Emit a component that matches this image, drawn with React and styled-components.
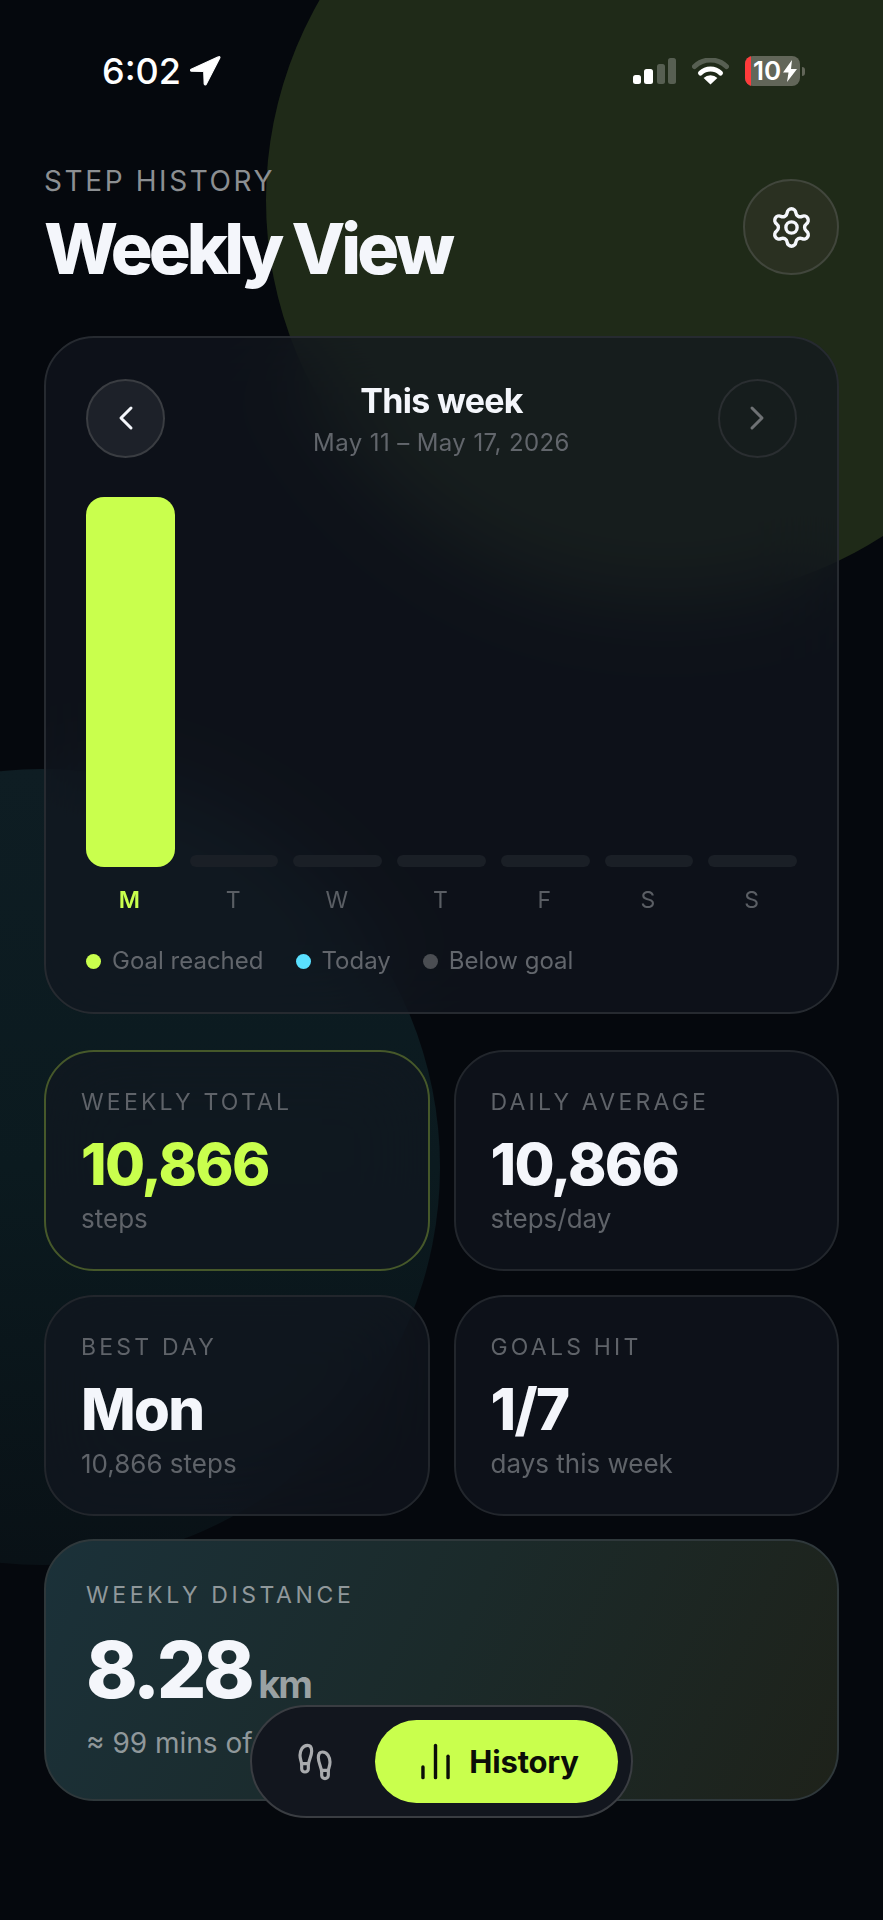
import React from "react";
import styled, { createGlobalStyle } from "styled-components";
import { ChevronLeft, ChevronRight, Settings, Footprints, ChartNoAxesColumn } from "lucide-react";

const LIME = "#c9ff4d";
const days = [
  { letter: "M", height: 370, hit: true },
  { letter: "T", height: 12 },
  { letter: "W", height: 12 },
  { letter: "T", height: 12 },
  { letter: "F", height: 12 },
  { letter: "S", height: 12 },
  { letter: "S", height: 12 },
];
const stats = [
  { label: "WEEKLY TOTAL", value: "10,866", sub: "steps", accent: true },
  { label: "DAILY AVERAGE", value: "10,866", sub: "steps/day" },
  { label: "BEST DAY", value: "Mon", sub: "10,866 steps" },
  { label: "GOALS HIT", value: "1/7", sub: "days this week" },
];

const App = () => {
  return (
    <Page>
      <GlobalStyle />
      <GreenBlob />
      <TealBlob />
      <Content>
        <StatusBar>
          <Clock>
            6:02
            <svg width="32" height="32" viewBox="0 0 30 30">
              <path d="M28 1.5 2 13.4c-1 .5-.7 1.8.4 1.8l10.9.3c.3 0 .5.2.5.5l.4 11c0 1.2 1.5 1.5 2 .4L29 2.6c.3-.7-.4-1.4-1-1.1Z" fill="#fff" stroke="#fff" strokeWidth="1" />
            </svg>
          </Clock>
          <StatusIcons>
            <svg width="43" height="26" viewBox="0 0 43 26">
              <rect x="0" y="17" width="8" height="9" rx="2.5" fill="#fff" />
              <rect x="11" y="11" width="9" height="15" rx="2.5" fill="#fff" />
              <rect x="24" y="6" width="8" height="20" rx="2.5" fill="#fff" opacity=".25" />
              <rect x="35" y="0" width="8" height="26" rx="2.5" fill="#fff" opacity=".25" />
            </svg>
            <svg width="37" height="27" viewBox="0 0 37 27">
              <path d="M2.5 8.5a23 23 0 0 1 32 0" fill="none" stroke="#fff" strokeOpacity=".25" strokeWidth="5" strokeLinecap="round" />
              <path d="M8.5 15a14.5 14.5 0 0 1 20 0" fill="none" stroke="#fff" strokeWidth="5" strokeLinecap="round" />
              <path d="M18.5 26.5 11.6 20a10 10 0 0 1 13.8 0Z" fill="#fff" />
            </svg>
            <Battery>
              <BatteryBody>
                <BatteryLow />
                <BatteryText>10</BatteryText>
                <svg width="14" height="22" viewBox="0 0 14 22">
                  <path d="M9 0 0 12.5h5.5L4 22l10-13H8Z" fill="#fff" />
                </svg>
              </BatteryBody>
              <BatteryNub />
            </Battery>
          </StatusIcons>
        </StatusBar>

        <Header>
          <div>
            <Eyebrow>STEP HISTORY</Eyebrow>
            <Title>Weekly View</Title>
          </div>
          <GearButton>
            <Settings size={45} strokeWidth={1.8} color="#f4f6fb" />
          </GearButton>
        </Header>

        <ChartCard>
          <WeekRow>
            <RoundButton>
              <ChevronLeft size={40} strokeWidth={1.8} color="#f4f6fb" />
            </RoundButton>
            <WeekTitle>
              <strong>This week</strong>
              <span>May 11 – May 17, 2026</span>
            </WeekTitle>
            <RoundButton $dim>
              <ChevronRight size={40} strokeWidth={1.8} color="#6e7174" />
            </RoundButton>
          </WeekRow>
          <Bars>
            {days.map((day, i) => (
              <BarColumn key={i}>
                <Bar $hit={day.hit} style={{ height: day.height }} />
              </BarColumn>
            ))}
          </Bars>
          <DayLabels>
            {days.map((day, i) => (
              <DayLabel key={i} $hit={day.hit}>{day.letter}</DayLabel>
            ))}
          </DayLabels>
          <Legend>
            <LegendItem><Dot $color={LIME} />Goal reached</LegendItem>
            <LegendItem><Dot $color="#5ae0ff" />Today</LegendItem>
            <LegendItem><Dot $color="#4a4d52" />Below goal</LegendItem>
          </Legend>
        </ChartCard>

        <StatGrid>
          {stats.map((stat) => (
            <StatCard key={stat.label} $accent={stat.accent}>
              <StatLabel>{stat.label}</StatLabel>
              <StatValue $accent={stat.accent}>{stat.value}</StatValue>
              <StatSub>{stat.sub}</StatSub>
            </StatCard>
          ))}
        </StatGrid>

        <DistanceCard>
          <DistanceLabel>WEEKLY DISTANCE</DistanceLabel>
          <DistanceValue>8.28<small>km</small></DistanceValue>
          <DistanceSub>≈ 99 mins of walking</DistanceSub>
        </DistanceCard>
      </Content>

      <BottomNav>
        <NavIcon>
          <Footprints size={40} strokeWidth={1.9} color="#a9abae" />
        </NavIcon>
        <NavPill>
          <ChartNoAxesColumn size={43} strokeWidth={1.9} color="#0b0d08" />
          History
        </NavPill>
      </BottomNav>
    </Page>
  );
};

const GlobalStyle = createGlobalStyle`
  html, body {
    margin: 0;
    padding: 0;
    background: #05080d;
  }
  * { box-sizing: border-box; }
`;
const Page = styled.div`
  position: relative;
  width: 883px;
  height: 1920px;
  overflow: hidden;
  background: #05080d;
  font-family: Inter, "Liberation Sans", sans-serif;
  color: #f4f6fb;
`;
const GreenBlob = styled.div`
  position: absolute;
  left: 266px;
  top: -200px;
  width: 800px;
  height: 800px;
  border-radius: 50%;
  background: #1f2a18;
`;
const TealBlob = styled.div`
  position: absolute;
  left: -356px;
  top: 769px;
  width: 796px;
  height: 796px;
  border-radius: 50%;
  background: linear-gradient(180deg, #0e1d23 0%, #0b1a1f 50%, #091116 100%);
`;
const Content = styled.div`
  position: relative;
  display: flex;
  flex-direction: column;
  padding: 0 44px;
`;
const StatusBar = styled.div`
  display: flex;
  align-items: center;
  justify-content: space-between;
  height: 30px;
  margin-top: 56px;
  padding: 0 34px 0 58px;
`;
const Clock = styled.div`
  display: flex;
  align-items: center;
  gap: 8px;
  font-size: 36px;
  font-weight: 500;
  color: #fff;
`;
const StatusIcons = styled.div`
  display: flex;
  align-items: center;
  gap: 16px;
`;
const Battery = styled.div`
  display: flex;
  align-items: center;
  gap: 2px;
`;
const BatteryBody = styled.div`
  display: flex;
  align-items: center;
  gap: 2px;
  width: 55px;
  height: 30px;
  border-radius: 8px;
  overflow: hidden;
  background: #626659;
`;
const BatteryLow = styled.div`
  width: 6px;
  height: 100%;
  background: #ff3b3b;
`;
const BatteryText = styled.span`
  font-size: 26px;
  font-weight: 600;
  color: #fff;
  line-height: 30px;
`;
const BatteryNub = styled.div`
  width: 3px;
  height: 9px;
  border-radius: 0 3px 3px 0;
  background: #626659;
`;
const Header = styled.div`
  display: flex;
  align-items: center;
  justify-content: space-between;
  margin-top: 79px;
`;
const Eyebrow = styled.div`
  font-size: 28px;
  line-height: 32px;
  font-weight: 400;
  letter-spacing: 2.6px;
  color: #8c8f92;
`;
const Title = styled.h1`
  margin: 14px 0 0;
  font-size: 70px;
  line-height: 76px;
  font-weight: 800;
  letter-spacing: -4px;
  color: #f4f6fb;
`;
const GearButton = styled.div`
  display: flex;
  align-items: center;
  justify-content: center;
  width: 96px;
  height: 96px;
  margin-top: 2px;
  border-radius: 50%;
  border: 2px solid #41463c;
  background: #2a3021;
`;
const ChartCard = styled.section`
  display: flex;
  flex-direction: column;
  height: 678px;
  margin-top: 49px;
  padding: 40px 40px 0;
  border: 2px solid #262a30;
  border-radius: 50px;
  background: rgba(19, 23, 32, 0.65);
  backdrop-filter: blur(40px);
`;
const WeekRow = styled.div`
  display: flex;
  align-items: center;
  justify-content: space-between;
`;
const RoundButton = styled.div`
  display: flex;
  align-items: center;
  justify-content: center;
  width: 79px;
  height: 79px;
  border-radius: 50%;
  border: 2px solid ${(p) => (p.$dim ? "#2a2e31" : "#3a3d42")};
  background: ${(p) => (p.$dim ? "transparent" : "#1d2129")};
`;
const WeekTitle = styled.div`
  display: flex;
  flex-direction: column;
  align-items: center;
  padding-top: 3px;
  strong {
    font-size: 34px;
    line-height: 40px;
    font-weight: 700;
    letter-spacing: -0.7px;
    color: #f4f6fb;
  }
  span {
    margin-top: 7px;
    font-size: 24px;
    line-height: 30px;
    letter-spacing: 0.4px;
    color: #62666c;
  }
`;
const Bars = styled.div`
  display: grid;
  grid-template-columns: repeat(7, 1fr);
  column-gap: 15px;
  align-items: end;
  height: 372px;
  margin-top: 37px;
`;
const BarColumn = styled.div`
  display: flex;
  align-items: flex-end;
`;
const Bar = styled.div`
  width: 100%;
  border-radius: ${(p) => (p.$hit ? "18px" : "6px")};
  background: ${(p) => (p.$hit ? LIME : "#1a1f26")};
`;
const DayLabels = styled.div`
  display: grid;
  grid-template-columns: repeat(7, 1fr);
  column-gap: 15px;
  margin-top: 19px;
`;
const DayLabel = styled.div`
  padding-right: 2px;
  text-align: center;
  font-size: 23px;
  line-height: 28px;
  font-weight: ${(p) => (p.$hit ? 600 : 400)};
  color: ${(p) => (p.$hit ? LIME : "#5a5e64")};
`;
const Legend = styled.div`
  display: flex;
  gap: 32px;
  margin-top: 32px;
`;
const LegendItem = styled.div`
  display: flex;
  align-items: center;
  gap: 11px;
  font-size: 24px;
  line-height: 30px;
  color: #62666c;
`;
const Dot = styled.span`
  width: 15px;
  height: 15px;
  border-radius: 50%;
  background: ${(p) => p.$color};
`;
const StatGrid = styled.div`
  display: grid;
  grid-template-columns: 1fr 1fr;
  grid-auto-rows: 221px;
  gap: 24px;
  margin-top: 36px;
`;
const StatCard = styled.div`
  padding: 36px 35px 0;
  border: 2px solid ${(p) => (p.$accent ? "#46582a" : "#22262c")};
  border-radius: 50px;
  background: rgba(19, 23, 32, 0.65);
  backdrop-filter: blur(40px);
`;
const StatLabel = styled.div`
  font-size: 23px;
  line-height: 28px;
  letter-spacing: 3.2px;
  color: #5f6369;
`;
const StatValue = styled.div`
  margin-top: 15px;
  font-size: 58px;
  line-height: 66px;
  font-weight: 800;
  letter-spacing: -1.7px;
  color: ${(p) => (p.$accent ? LIME : "#f4f6fb")};
`;
const StatSub = styled.div`
  margin-top: 6px;
  font-size: 26px;
  line-height: 32px;
  color: #5f6369;
`;
const DistanceCard = styled.section`
  height: 262px;
  margin-top: 23px;
  padding: 40px 40px 0;
  border: 2px solid #2f383b;
  border-radius: 50px;
  background: linear-gradient(115deg, #1b3139 0%, #1b2a2a 50%, #1e221a 100%);
`;
const DistanceLabel = styled.div`
  font-size: 23px;
  line-height: 28px;
  letter-spacing: 3.6px;
  color: #90989b;
`;
const DistanceValue = styled.div`
  margin-top: 23px;
  font-size: 78px;
  line-height: 76px;
  font-weight: 800;
  letter-spacing: -3.5px;
  color: #f4f6fb;
  small {
    margin-left: 7px;
    font-size: 38px;
    font-weight: 700;
    letter-spacing: -2px;
    color: #9aa1a3;
  }
`;
const DistanceSub = styled.div`
  margin-top: 4px;
  font-size: 28px;
  line-height: 34px;
  color: #90989b;
`;
const BottomNav = styled.nav`
  position: absolute;
  left: 250px;
  top: 1705px;
  display: flex;
  align-items: center;
  justify-content: space-between;
  width: 383px;
  height: 113px;
  padding: 0 13px 0 43px;
  border: 2px solid #3a3d42;
  border-radius: 57px;
  background: #12161e;
`;
const NavIcon = styled.div`
  display: flex;
  align-items: center;
`;
const NavPill = styled.div`
  display: flex;
  align-items: center;
  justify-content: center;
  gap: 12px;
  width: 243px;
  height: 83px;
  border-radius: 42px;
  background: ${LIME};
  color: #0b0d08;
  font-size: 31px;
  font-weight: 700;
  letter-spacing: -0.2px;
`;

export default App;
